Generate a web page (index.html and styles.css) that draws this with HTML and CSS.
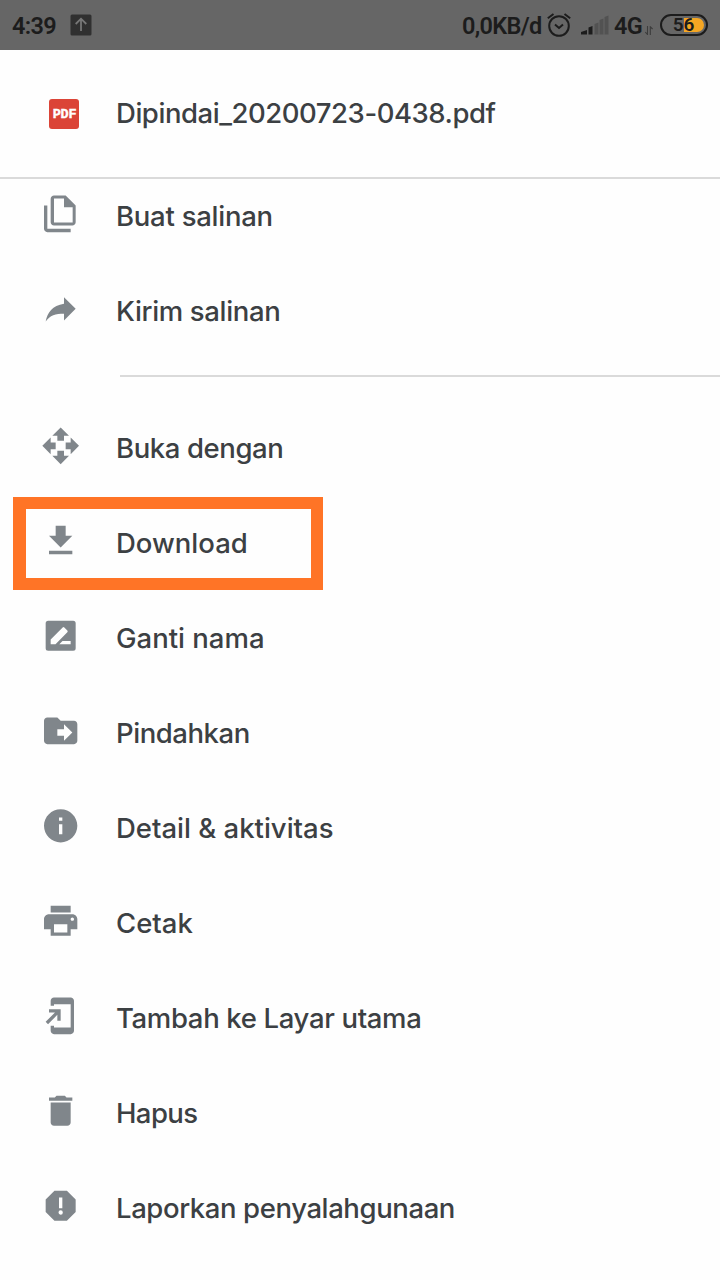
FILE: index.html
```html
<!DOCTYPE html>
<html lang="id">
<head>
<meta charset="utf-8">
<title>Dipindai_20200723-0438.pdf</title>
<link rel="stylesheet" href="styles.css">
</head>
<body>
<div class="status">
  <span class="status-text clock">4:39</span>
  <svg class="upload" width="22" height="22" viewBox="0 0 22 22"><rect x=".5" y=".5" width="21" height="21" rx="1.500" fill="#303030"/><path d="M11 17V5M5.700 10L11 4.700 16.300 10" fill="none" stroke="#777" stroke-width="1.800"/></svg>
  <span class="status-text rate">0,0KB/d</span>
  <svg class="alarm" width="24" height="24" viewBox="0 0 24 24" fill="none" stroke="#1c1c1c" stroke-width="2"><circle cx="12" cy="13" r="9.800"/><path d="M.8 5.200L6.500 1M17.500 1l5.700 4.200M8 11.500l4 3.500 4-3.500"/></svg>
  <svg class="signal" width="28" height="20" viewBox="0 0 28 20"><path d="M0 19.500v-2.500l6-2v4.500zM7.500 19.500v-7l4-1.500v8.500z" fill="#1c1c1c"/><path d="M13.500 19.500V9l4-1.500v12zM18.500 19.500V5l4-1.500v16zM23.500 19.500V2l4-1.500v19z" fill="#525252"/></svg>
  <span class="status-text network">4G</span>
  <svg class="data" width="8" height="9" viewBox="0 0 8 9" fill="none" stroke="#3c3c3c" stroke-width="1.100"><path d="M2.500 0v8.500L.3 6M5.300 9V.8L7.600 3"/></svg>
  <div class="battery"><span>56</span></div>
</div>

<header class="header">
  <div class="pdf"><span>PDF</span></div>
  <h1 class="label title">Dipindai_20200723-0438.pdf</h1>
</header>

<main class="sheet">
  <div class="group group-first">
    <div class="row"><svg class="icon" viewBox="0.2 0.1 24 24"><path fill-rule="evenodd" d="M15 1H8C6.900 1 6 1.900 6 3v14c0 1.100.9 2 2 2h11c1.100 0 2-.9 2-2V7zM8 2.800h6V8h5.200v9.200H8zM4 7H2v14c0 1.100.9 2 2 2h14v-2H4z"/></svg><span class="label copy">Buat salinan</span></div>
    <div class="row"><svg class="icon" viewBox="0.2 0.1 24 24"><path d="M14 9V5l7 7-7 7v-4.100c-5 0-8.500.9-11 4.700C4 14.500 7 10 14 9z"/></svg><span class="label send">Kirim salinan</span></div>
  </div>
  <div class="group group-second">
    <div class="row"><svg class="icon" viewBox="0.2 0.1 24 24"><path d="M10 9h4V6h3l-5-5-5 5h3v3zm-1 1H6V7l-5 5 5 5v-3h3v-4zm14 2l-5-5v3h-3v4h3v3l5-5zm-9 3h-4v3H7l5 5 5-5h-3v-3z"/></svg><span class="label open">Buka dengan</span></div>
    <div class="row marked"><svg class="icon" viewBox="0.2 0.1 24 24"><path d="M19 9h-4V3H9v6H5l7 7 7-7zM5 18v2h14v-2H5z"/></svg><span class="label download">Download</span></div>
    <div class="row"><svg class="icon" viewBox="0.2 0.1 24 24"><path fill-rule="evenodd" d="M4.500 3h15A1.500 1.500 0 0 1 21 4.500v15a1.500 1.500 0 0 1-1.500 1.500h-15A1.500 1.500 0 0 1 3 19.500v-15A1.500 1.500 0 0 1 4.500 3zM6 17v-2.800l7.200-7.200q.5-.5 1 0l1.800 1.800q.5.500 0 1L8.900 17zM11.200 17l1.900-1.900H18V17z"/></svg><span class="label rename">Ganti nama</span></div>
    <div class="row"><svg class="icon" viewBox="0.2 0.1 24 24"><path d="M20 6h-8l-2-2H4c-1.100 0-2 .9-2 2v12c0 1.100.9 2 2 2h16c1.100 0 2-.9 2-2V8c0-1.100-.9-2-2-2zm-6 12v-3h-4v-4h4V8l5 5-5 5z"/></svg><span class="label move">Pindahkan</span></div>
    <div class="row"><svg class="icon" viewBox="0.2 0.1 24 24"><path d="M12 2C6.480 2 2 6.480 2 12s4.480 10 10 10 10-4.480 10-10S17.520 2 12 2zm1 15h-2v-6h2v6zm0-8h-2V7h2v2z"/></svg><span class="label detail">Detail &amp; aktivitas</span></div>
    <div class="row"><svg class="icon" viewBox="0.2 0.1 24 24"><path d="M19 8H5c-1.660 0-3 1.340-3 3v6h4v4h12v-4h4v-6c0-1.660-1.340-3-3-3zm-3 11H8v-5h8v5zm3-7c-.55 0-1-.45-1-1s.45-1 1-1 1 .45 1 1-.45 1-1 1zm-1-9H6v4h12V3z"/></svg><span class="label print">Cetak</span></div>
    <div class="row"><svg class="icon" viewBox="0.2 0.1 24 24"><path d="M18 1H8c-1.100 0-2 .9-2 2v3h2V5h10v14H8v-1H6v3c0 1.100.9 2 2 2h10c1.100 0 2-.9 2-2V3c0-1.100-.9-2-2-2zM10 15h2V8H5v2h3.590L3 15.590 4.410 17 10 11.410V15z"/></svg><span class="label home">Tambah ke Layar utama</span></div>
    <div class="row"><svg class="icon" viewBox="0.2 0.1 24 24"><path d="M6 19c0 1.100.9 2 2 2h8c1.100 0 2-.9 2-2V7H6v12zM19 4h-3.500l-1-1h-5l-1 1H5v2h14V4z"/></svg><span class="label delete">Hapus</span></div>
    <div class="row"><svg class="icon" viewBox="0.2 0.1 24 24"><path fill-rule="evenodd" d="M15.730 3H8.270L3 8.270v7.460L8.270 21h7.460L21 15.730V8.270L15.730 3zM11 7h2v6.500h-2zM12 14.700a1.300 1.300 0 1 1 0 2.600 1.300 1.300 0 0 1 0-2.600z"/></svg><span class="label report">Laporkan penyalahgunaan</span></div>
  </div>
</main>
</body>
</html>
```
FILE: styles.css
```css
*,
*::after {
  box-sizing: border-box;
}

body {
  margin: 0;
  width: 720px;
  height: 1280px;
  overflow: hidden;
  background: #fefefe;
  color: #3c4043;
  font-family: Inter, "Liberation Sans", sans-serif;
}

.status {
  display: flex;
  align-items: center;
  height: 50px;
  padding: 0 12px;
  background: #666;
  color: #1c1c1c;
  font-family: Roboto, "Liberation Sans", sans-serif;
}

.status svg {
  flex: none;
}

.status-text {
  flex: none;
  font-size: 23.5px;
  font-weight: 600;
  line-height: 28px;
  letter-spacing: -0.7px;
  white-space: nowrap;
  padding-top: 1px;
}

.clock {
  width: 58px;
}

.rate {
  width: 84px;
  margin-left: 370px;
}

.alarm {
  margin-left: 1px;
}

.signal {
  margin-left: 10px;
}

.network {
  width: 30px;
  margin-left: 5px;
  letter-spacing: -0.8px;
}

.data {
  margin: 10px 0 0 1px;
}

.battery {
  flex: none;
  display: flex;
  align-items: center;
  justify-content: center;
  width: 48px;
  height: 22px;
  margin-left: 7px;
  padding: 2px;
  border: 2px solid #1c1c1c;
  border-radius: 11px;
  background: linear-gradient(90deg, transparent 20px, #f5a623 20px) content-box;
  font-size: 19px;
  font-weight: 600;
  line-height: 18px;
}

.battery span {
  margin-right: 1px;
}

.header {
  display: flex;
  align-items: center;
  height: 129px;
  padding-left: 49px;
  border-bottom: 2px solid #dadada;
}

.pdf {
  display: flex;
  align-items: center;
  justify-content: center;
  width: 30px;
  height: 30px;
  border-radius: 3px;
  background: #db4437;
  color: #fff;
  font: bold 13.5px/30px "Liberation Mono", monospace;
}

.pdf span {
  padding: 2px 0 0 1px;
  letter-spacing: -0.2px;
  -webkit-text-stroke: 0.4px #fff;
}

.label {
  margin: 0;
  font-size: 27.5px;
  font-weight: 500;
  line-height: 34px;
  white-space: nowrap;
}

.title {
  margin: -2px 0 0 37px;
  letter-spacing: -0.45px;
}

.sheet {
  overflow: hidden;
}

.group-first {
  margin-top: -13px;
  padding-bottom: 19px;
}

.group-second {
  padding-top: 23px;
  background: linear-gradient(#dadada, #dadada) 120px 0 / 600px 2px no-repeat;
}

.row {
  position: relative;
  display: flex;
  align-items: center;
  height: 95px;
  padding-left: 40.7px;
}

.icon {
  flex: none;
  width: 40px;
  height: 40px;
  fill: #80868b;
}

.row .label {
  margin: 5px 0 0 35.3px;
}

.copy {
  letter-spacing: -0.25px;
}

.send,
.home {
  letter-spacing: -0.34px;
}

.open,
.report {
  letter-spacing: -0.4px;
}

.move {
  letter-spacing: -0.45px;
}

.delete {
  letter-spacing: -0.6px;
}

.marked::after {
  content: "";
  position: absolute;
  left: 13px;
  top: 4px;
  width: 310px;
  height: 93px;
  border: 12px solid #ff7426;
  border-left-width: 13px;
}
```
